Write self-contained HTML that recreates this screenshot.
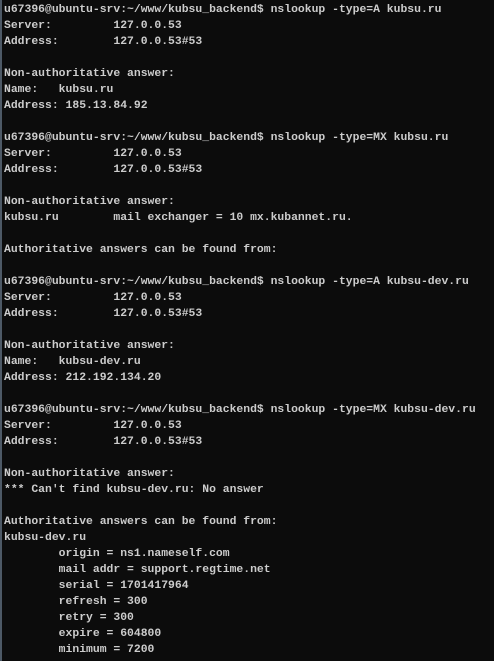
<!DOCTYPE html>
<html><head><meta charset="utf-8"><style>
html,body{margin:0;padding:0;background:#0c0c0c;width:494px;height:661px;overflow:hidden}
body{border-left:2px solid #4d5966;box-sizing:border-box}
pre{margin:0;position:absolute;left:4px;top:2px;font-family:"Liberation Mono",monospace;font-size:11.4px;font-weight:bold;line-height:16px;color:#cccccc;white-space:pre}
</style></head><body><pre>u67396@ubuntu-srv:~/www/kubsu_backend$ nslookup -type=A kubsu.ru
Server:         127.0.0.53
Address:        127.0.0.53#53

Non-authoritative answer:
Name:   kubsu.ru
Address: 185.13.84.92

u67396@ubuntu-srv:~/www/kubsu_backend$ nslookup -type=MX kubsu.ru
Server:         127.0.0.53
Address:        127.0.0.53#53

Non-authoritative answer:
kubsu.ru        mail exchanger = 10 mx.kubannet.ru.

Authoritative answers can be found from:

u67396@ubuntu-srv:~/www/kubsu_backend$ nslookup -type=A kubsu-dev.ru
Server:         127.0.0.53
Address:        127.0.0.53#53

Non-authoritative answer:
Name:   kubsu-dev.ru
Address: 212.192.134.20

u67396@ubuntu-srv:~/www/kubsu_backend$ nslookup -type=MX kubsu-dev.ru
Server:         127.0.0.53
Address:        127.0.0.53#53

Non-authoritative answer:
*** Can't find kubsu-dev.ru: No answer

Authoritative answers can be found from:
kubsu-dev.ru
        origin = ns1.nameself.com
        mail addr = support.regtime.net
        serial = 1701417964
        refresh = 300
        retry = 300
        expire = 604800
        minimum = 7200</pre></body></html>
